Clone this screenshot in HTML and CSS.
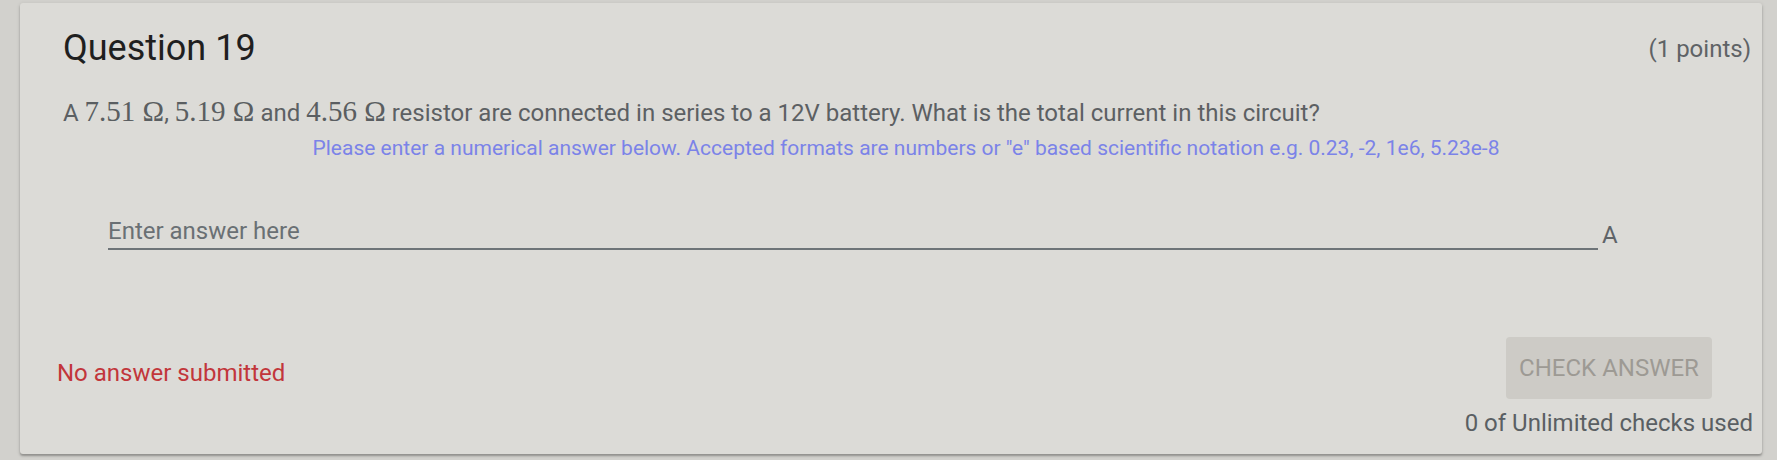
FILE: index.html
```html
<!DOCTYPE html>
<html>
<head>
<meta charset="utf-8">
<link rel="stylesheet" href="styles.css">
</head>
<body>
<div class="card">
  <div class="header">
    <div class="title">Question 19</div>
    <div class="points">(1 points)</div>
  </div>
  <div class="question">A <span class="math">7.51 Ω</span>, <span class="math">5.19 Ω</span> and <span class="math">4.56 Ω</span> resistor are connected in series to a 12V battery. What is the total current in this circuit?</div>
  <div class="hint">Please enter a numerical answer below. Accepted formats are numbers or "e" based scientific notation e.g. 0.23, -2, 1e6, 5.23e-8</div>
  <div class="answer-row">
    <div class="field"><span class="placeholder">Enter answer here</span></div>
    <div class="unit">A</div>
  </div>
  <div class="footer">
    <div class="status">No answer submitted</div>
    <div class="actions">
      <button class="check">CHECK ANSWER</button>
      <div class="checks">0 of Unlimited checks used</div>
    </div>
  </div>
</div>
</body>
</html>
```
FILE: styles.css
```css
html, body {
  margin: 0;
  padding: 0;
}
body {
  background: #d2d1cd;
  font-family: Roboto, "Liberation Sans", sans-serif;
  width: 1777px;
  height: 460px;
  overflow: hidden;
}
.card {
  box-sizing: border-box;
  margin: 3px 0 0 20px;
  width: 1742px;
  height: 451px;
  background: #dcdbd7;
  border-radius: 3px;
  box-shadow: 0 2px 2px rgba(0,0,0,0.25), 0 1px 4px rgba(0,0,0,0.12);
  padding: 25px 11px 0 43px;
  display: flex;
  flex-direction: column;
}
.header {
  display: flex;
  justify-content: space-between;
  align-items: flex-start;
  height: 40px;
}
.title {
  font-size: 36px;
  line-height: 40px;
  color: #1f1f1f;
}
.points {
  font-size: 24px;
  line-height: 28px;
  margin-top: 7px;
  color: #5f6366;
}
.question {
  margin-top: 29px;
  font-size: 24px;
  line-height: 32px;
  height: 32px;
  color: #5c6063;
  white-space: nowrap;
}
.math {
  font-family: "Liberation Serif", "DejaVu Serif", serif;
  font-size: 29px;
  line-height: 1;
  color: #5a5e61;
}
.hint {
  margin-top: 5px;
  text-align: center;
  font-size: 21px;
  line-height: 28px;
  color: #7b83e8;
  padding-right: 2px;
}
.answer-row {
  display: flex;
  align-items: flex-end;
  margin-top: 54px;
  margin-left: 45px;
}
.field {
  width: 1490px;
  padding-bottom: 2px;
  border-bottom: 2px solid #6e7478;
  display: flex;
  align-items: flex-end;
}
.placeholder {
  font-size: 24px;
  line-height: 30px;
  color: #6a7074;
}
.unit {
  font-size: 24px;
  line-height: 30px;
  color: #5f6468;
  margin-left: 4px;
}
.footer {
  display: flex;
  justify-content: space-between;
  align-items: flex-start;
  margin-top: 87px;
  margin-left: -6px;
}
.status {
  margin-top: 22px;
  font-size: 24px;
  line-height: 28px;
  color: #c2363b;
}
.actions {
  display: flex;
  flex-direction: column;
  align-items: flex-end;
}
.check {
  margin-right: 39px;
  width: 206px;
  height: 62px;
  border: none;
  border-radius: 4px;
  background: #cdcbc6;
  color: #9d9a94;
  font-family: Roboto, "Liberation Sans", sans-serif;
  font-size: 24px;
  padding: 0;
}
.checks {
  margin-top: 10px;
  margin-right: -2px;
  font-size: 24px;
  line-height: 28px;
  color: #5a5f63;
}
```
